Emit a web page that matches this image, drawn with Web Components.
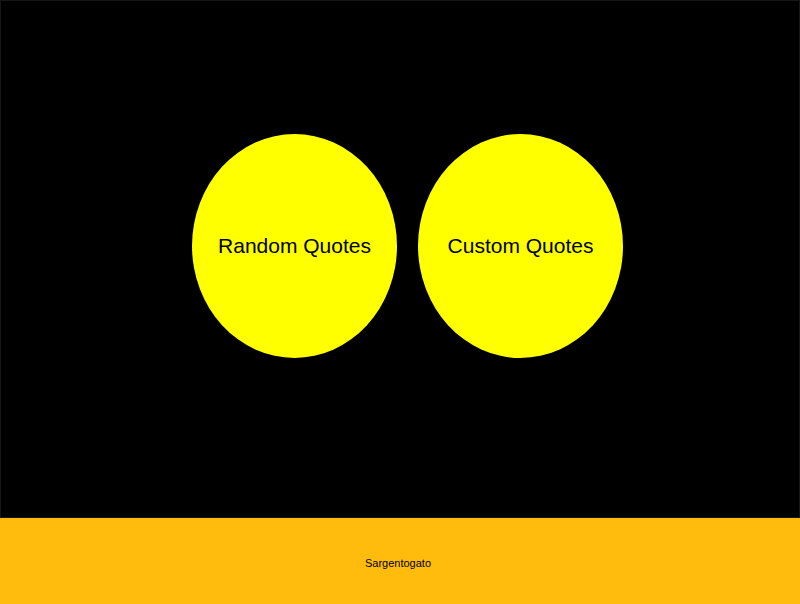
<!DOCTYPE html>
<html lang="en">
<head>
<meta charset="utf-8">
<title>Quotes</title>
<style>
html, body { height: 100%; margin: 0; }
body { background: #000; font-family: "Liberation Sans", Arial, sans-serif; }
</style>
</head>
<body>
<quote-app>
  <quote-choice>Random Quotes</quote-choice>
  <quote-choice>Custom Quotes</quote-choice>
  <page-footer slot="footer">Sargentogato</page-footer>
</quote-app>
<script>
class QuoteApp extends HTMLElement {
  constructor() {
    super();
    this.attachShadow({ mode: "open" }).innerHTML = `
      <style>
        :host { display: flex; flex-direction: column; min-height: 100%; background: #000; }
        main { flex: 1; display: flex; flex-wrap: wrap; justify-content: center; align-items: center; gap: 21px; padding: 0 0 26px 15px; border: 1px solid #161616; }
      </style>
      <main><slot></slot></main>
      <slot name="footer"></slot>`;
  }
}
class QuoteChoice extends HTMLElement {
  constructor() {
    super();
    this.attachShadow({ mode: "open" }).innerHTML = `
      <style>
        :host { display: block; }
        button { display: block; width: 205px; height: 224px; padding: 0; border: 0; border-radius: 50%; background: #ff0; color: #000; font: 21px/24px "Liberation Sans", Arial, sans-serif; cursor: pointer; }
      </style>
      <button type="button"><slot></slot></button>`;
  }
}
class PageFooter extends HTMLElement {
  constructor() {
    super();
    this.attachShadow({ mode: "open" }).innerHTML = `
      <style>
        :host { display: block; }
        footer { padding: 38px 4px 34px 0; background: #ffbc0d; color: #000; text-align: center; font-size: 11px; line-height: 14px; }
      </style>
      <footer><slot></slot></footer>`;
  }
}
customElements.define("quote-app", QuoteApp);
customElements.define("quote-choice", QuoteChoice);
customElements.define("page-footer", PageFooter);
</script>
</body>
</html>
